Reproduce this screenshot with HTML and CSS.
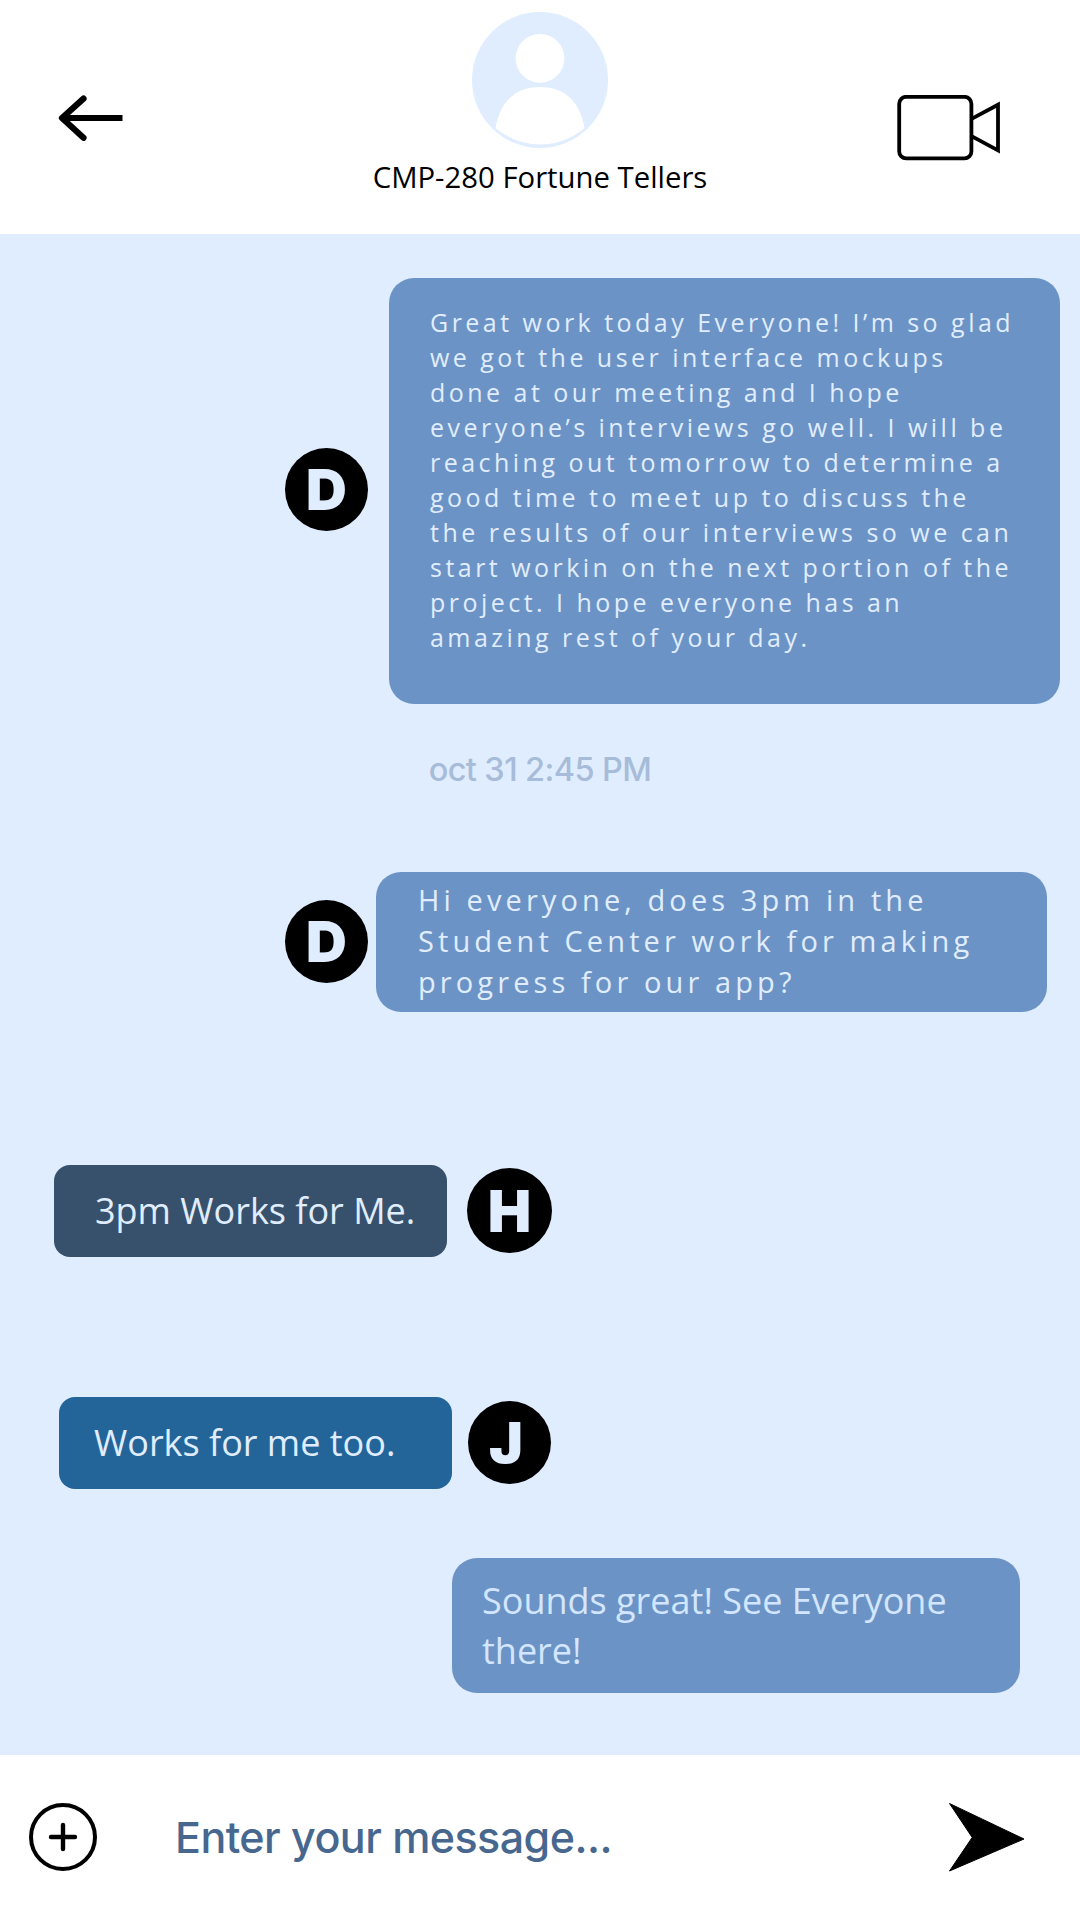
FILE: index.html
```html
<!DOCTYPE html>
<html lang="en">
<head>
<meta charset="utf-8">
<title>CMP-280 Fortune Tellers</title>
<link rel="stylesheet" href="styles.css">
</head>
<body>
<div class="app">
  <header class="header">
    <svg class="back" width="66" height="48" viewBox="0 0 66 48" fill="none" stroke="#000" stroke-width="6">
      <path d="M4 24H64.5"/>
      <path d="M25.500 4.600L4 24L25.500 43.800" stroke-width="6.200" stroke-linecap="round" stroke-linejoin="round"/>
    </svg>
    <div class="group">
      <svg class="group-photo" width="136" height="136" viewBox="0 0 136 136">
        <circle cx="68" cy="68" r="68" fill="#e0edff"/>
        <circle cx="68" cy="46.3" r="24.4" fill="#fff"/>
        <path d="M23.5 116C28 90 43 75 68 75S108 90 112.500 116Q93 132.500 68 132.500T23.500 116Z" fill="#fff"/>
      </svg>
      <h1 class="group-name">CMP-280 Fortune Tellers</h1>
    </div>
    <svg class="video" width="104" height="66" viewBox="0 0 104 66" fill="none" stroke="#000" stroke-width="3.8">
      <rect x="2.200" y="1.800" width="72.200" height="61.600" rx="7"/>
      <path d="M75 23.600L101 9.700V55.400L75 41.300"/>
    </svg>
  </header>

  <main class="chat">
    <div class="row row-first">
      <span class="avatar">D</span>
      <p class="bubble bubble-long">Great work today Everyone! I’m so glad<br>we got the user interface mockups<br>done at our meeting and I hope<br>everyone’s interviews go well. I will be<br>reaching out tomorrow to determine a<br>good time to meet up to discuss the<br>the results of our interviews so we can<br>start workin on the next portion of the<br>project. I hope everyone has an<br>amazing rest of your day.</p>
    </div>
    <time class="date">oct 31 2:45 PM</time>
    <div class="row row-second">
      <span class="avatar">D</span>
      <p class="bubble bubble-question">Hi everyone, does 3pm in the<br>Student Center work for making<br>progress for our app?</p>
    </div>
    <div class="row row-third">
      <p class="bubble bubble-slate">3pm Works for Me.</p>
      <span class="avatar avatar-large">H</span>
    </div>
    <div class="row row-fourth">
      <p class="bubble bubble-blue">Works for me too.</p>
      <span class="avatar avatar-j">J</span>
    </div>
    <div class="row row-fifth">
      <p class="bubble bubble-reply">Sounds great! See Everyone<br>there!</p>
    </div>
  </main>

  <footer class="composer">
    <svg class="add" width="68" height="68" viewBox="0 0 68 68" fill="none" stroke="#000" stroke-width="4">
      <circle cx="34" cy="34" r="32"/>
      <path d="M22 34H46M34 22V46" stroke-linecap="round" stroke-width="4.400"/>
    </svg>
    <span class="placeholder">Enter your message...</span>
    <svg class="send" width="76" height="69" viewBox="0 0 76 69">
      <path d="M.5 .5L75 36L.5 68L23.200 34.400Z" fill="#000" stroke="#000" stroke-linejoin="round"/>
    </svg>
  </footer>
</div>
</body>
</html>
```
FILE: styles.css
```css
* {
  box-sizing: border-box;
}

body {
  margin: 0;
  background: #fff;
  font-family: "Open Sans", "Noto Sans", sans-serif;
}

.app {
  display: flex;
  flex-direction: column;
  width: 1080px;
  height: 1920px;
  overflow: hidden;
}

.header {
  display: grid;
  grid-template-columns: 1fr auto 1fr;
  align-items: start;
  height: 234px;
  padding: 12px 79px 0 58px;
}

.back {
  margin-top: 82px;
}

.group {
  display: flex;
  flex-direction: column;
  align-items: center;
  margin-left: 21px;
}

.group-name {
  margin: 9px 0 0;
  color: #000;
  font-size: 29.300px;
  font-weight: 400;
  line-height: 40px;
  white-space: nowrap;
}

.video {
  justify-self: end;
  margin-top: 83px;
}

.chat {
  flex: none;
  display: flex;
  flex-direction: column;
  height: 1521px;
  background: #e0edff;
}

.row {
  display: flex;
  flex: none;
  align-items: center;
}

.row-first {
  gap: 21px;
  margin: 44px 0 0 285px;
}

.row-second {
  gap: 7.500px;
  margin: 82px 0 0 285px;
}

.row-third {
  gap: 20px;
  margin: 153px 0 0 54px;
}

.row-fourth {
  gap: 16px;
  margin: 140.500px 0 0 59px;
}

.row-fifth {
  margin: 69px 0 0 452.400px;
}

.bubble {
  flex: none;
  margin: 0;
  border-radius: 25px;
  background: #6c93c5;
  color: #e0edff;
  white-space: nowrap;
}

.bubble-long {
  width: 671.300px;
  height: 425.500px;
  padding: 26.500px 0 0 41px;
  font-size: 25px;
  line-height: 35px;
  letter-spacing: 3.470px;
}

.bubble-question {
  width: 671.500px;
  height: 140.500px;
  padding: 7px 0 0 42.500px;
  font-size: 29px;
  line-height: 41px;
  letter-spacing: 4.100px;
}

.bubble-slate,
.bubble-blue {
  width: 393px;
  height: 91.500px;
  padding: 20.500px 0 0 41px;
  border-radius: 16px;
  background: #37516c;
  font-size: 36px;
  line-height: 50.400px;
}

.bubble-blue {
  padding-left: 35px;
  background: #236599;
}

.bubble-reply {
  width: 567.600px;
  height: 135px;
  padding: 18px 0 0 29.600px;
  color: #d3e6ff;
  font-size: 36px;
  line-height: 50.400px;
}

.avatar {
  display: flex;
  flex: none;
  align-items: center;
  justify-content: center;
  width: 83px;
  height: 83px;
  border-radius: 50%;
  background: #000;
  color: #e0edff;
  font-family: Inter, "Liberation Sans", sans-serif;
  font-size: 56.500px;
  font-weight: 900;
  line-height: 1;
}

.row-first .avatar {
  margin-bottom: 2px;
}

.avatar-large {
  width: 85px;
  height: 85px;
  font-size: 58px;
}

.avatar-j {
  font-size: 57px;
  padding-right: 7px;
}

.date {
  align-self: center;
  margin-top: 46px;
  color: #a7bcd8;
  font-family: Inter, "Liberation Sans", sans-serif;
  font-size: 32.500px;
  font-weight: 540;
  line-height: 40px;
  letter-spacing: -0.600px;
}

.composer {
  display: flex;
  flex: none;
  align-items: center;
  height: 165px;
  padding: 0 55px 1px 29px;
}

.placeholder {
  margin: 0 0 1px 78px;
  color: #47678f;
  font-family: Inter, "Liberation Sans", sans-serif;
  font-size: 43px;
  font-weight: 540;
  line-height: 52px;
  letter-spacing: -0.550px;
}

.send {
  margin-left: auto;
}
```
